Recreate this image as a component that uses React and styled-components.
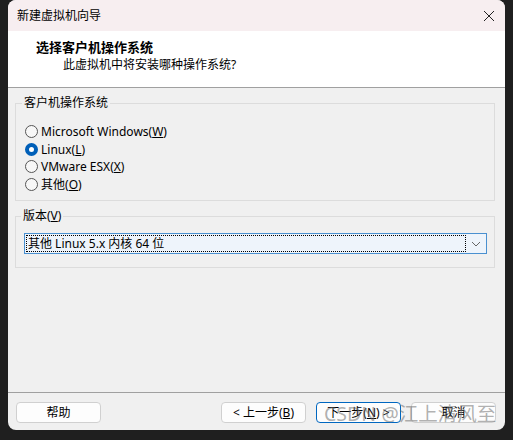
import React from "react";
import styled, { createGlobalStyle } from "styled-components";

const GlobalStyle = createGlobalStyle`
  html, body {
    margin: 0;
    padding: 0;
    background: #1f1f1f;
  }
  body {
    width: 513px;
    height: 440px;
    overflow: hidden;
    font-family: "Segoe UI", "Noto Sans", "Noto Sans CJK SC", sans-serif;
    font-size: 12px;
    color: #000;
  }
`;

const Page = styled.div`
  position: relative;
  padding-left: 8px;
  width: 513px;
  height: 440px;
  box-sizing: border-box;
`;

// dialog window
const Dialog = styled.div`
  width: 497px;
  height: 430px;
  display: flex;
  flex-direction: column;
  background: #f0f0f0;
  border-radius: 8px;
  overflow: hidden;
`;

const TitleBar = styled.div`
  height: 31px;
  flex: none;
  display: flex;
  align-items: center;
  justify-content: space-between;
  padding: 0 10px 0 9px;
  background: #f7eef0;
  line-height: 16px;
`;

const CloseBtn = styled.div`
  width: 12px;
  height: 12px;
  display: flex;
  svg {
    display: block;
  }
`;

const Header = styled.div`
  flex: none;
  background: #fff;
  border-bottom: 1px solid #a0a0a0;
  padding: 8px 0 0 28px;
  height: 48px;
`;

const HeadTitle = styled.div`
  font-weight: bold;
  font-size: 13px;
  line-height: 17px;
`;

const HeadSub = styled.div`
  padding-left: 27px;
  line-height: 17px;
`;

const Body = styled.div`
  flex: 1;
  display: flex;
  flex-direction: column;
  gap: 7px;
  padding: 7px 10px 0 7px;
`;

const Group = styled.fieldset`
  margin: 0;
  border: 1px solid #dcdcdc;
  padding: ${(p) => p.$pad};
  min-width: 0;
`;

const Legend = styled.legend`
  padding: 0 2px;
  margin-left: -3px;
  line-height: 16px;
`;

const RadioRow = styled.label`
  display: flex;
  align-items: center;
  height: 17.5px;
  gap: 3px;
`;

const RadioDot = styled.span`
  width: 13px;
  height: 13px;
  box-sizing: border-box;
  border-radius: 50%;
  flex: none;
  border: ${(p) => (p.$on ? "4px solid #005fb8" : "1px solid #555")};
  background: ${(p) => (p.$on ? "#fff" : "#f7f7f7")};
`;

const Select = styled.div`
  height: 21px;
  box-sizing: border-box;
  border: 1px solid #4a90d0;
  background: #eef4fb;
  display: flex;
  align-items: center;
  padding: 1px;
`;

const SelectValue = styled.div`
  flex: 1;
  height: 17px;
  box-sizing: border-box;
  border: 1px dotted #000;
  line-height: 15px;
  padding-left: 1px;
  white-space: nowrap;
`;

const Arrow = styled.div`
  width: 19px;
  display: flex;
  justify-content: center;
`;

const Footer = styled.div`
  flex: none;
  border-top: 1px solid #a0a0a0;
  display: flex;
  align-items: center;
  gap: 10px;
  padding: 9px 9px 7px 8px;
`;

const Button = styled.div`
  width: 85px;
  height: 21px;
  box-sizing: border-box;
  border: 1px solid ${(p) => (p.$primary ? "#0067c0" : "#d0d0d0")};
  border-radius: 4px;
  background: #fdfdfd;
  display: flex;
  align-items: center;
  justify-content: center;
  line-height: 16px;
  margin-right: ${(p) => (p.$push ? "auto" : "0")};
`;

const Watermark = styled.div`
  position: absolute;
  left: 324px;
  top: 402px;
  font-size: 19.5px;
  line-height: 24px;
  color: rgba(110, 110, 110, 0.55);
  white-space: nowrap;
  pointer-events: none;
`;

const options = [
  { label: "Microsoft Windows", key: "W" },
  { label: "Linux", key: "L", on: true },
  { label: "VMware ESX", key: "X" },
  { label: "其他", key: "O" },
];

export default function App() {
  return (
    <Page>
      <GlobalStyle />
      <Dialog>
        <TitleBar>
          <span>新建虚拟机向导</span>
          <CloseBtn>
            <svg width="12" height="12" viewBox="0 0 12 12">
              <path d="M1 1 L11 11 M11 1 L1 11" stroke="#222" strokeWidth="1" fill="none" />
            </svg>
          </CloseBtn>
        </TitleBar>
        <Header>
          <HeadTitle>选择客户机操作系统</HeadTitle>
          <HeadSub>此虚拟机中将安装哪种操作系统?</HeadSub>
        </Header>
        <Body>
          <Group $pad="12px 9px 7px 9px">
            <Legend>客户机操作系统</Legend>
            {options.map((o) => (
              <RadioRow key={o.key}>
                <RadioDot $on={o.on} />
                <span>
                  {o.label}(<u>{o.key}</u>)
                </span>
              </RadioRow>
            ))}
          </Group>
          <Group $pad="9px 7px 13px 8px">
            <Legend>
              版本(<u>V</u>)
            </Legend>
            <Select>
              <SelectValue>其他 Linux 5.x 内核 64 位</SelectValue>
              <Arrow>
                <svg width="10" height="6" viewBox="0 0 10 6">
                  <path d="M1 1 L5 5 L9 1" stroke="#666" strokeWidth="1" fill="none" />
                </svg>
              </Arrow>
            </Select>
          </Group>
        </Body>
        <Footer>
          <Button $push>帮助</Button>
          <Button>&lt; 上一步(<u>B</u>)</Button>
          <Button $primary>
            下一步(<u>N</u>) &gt;
          </Button>
          <Button>取消</Button>
        </Footer>
      </Dialog>
      <Watermark>CSDN @江上清风至</Watermark>
    </Page>
  );
}
